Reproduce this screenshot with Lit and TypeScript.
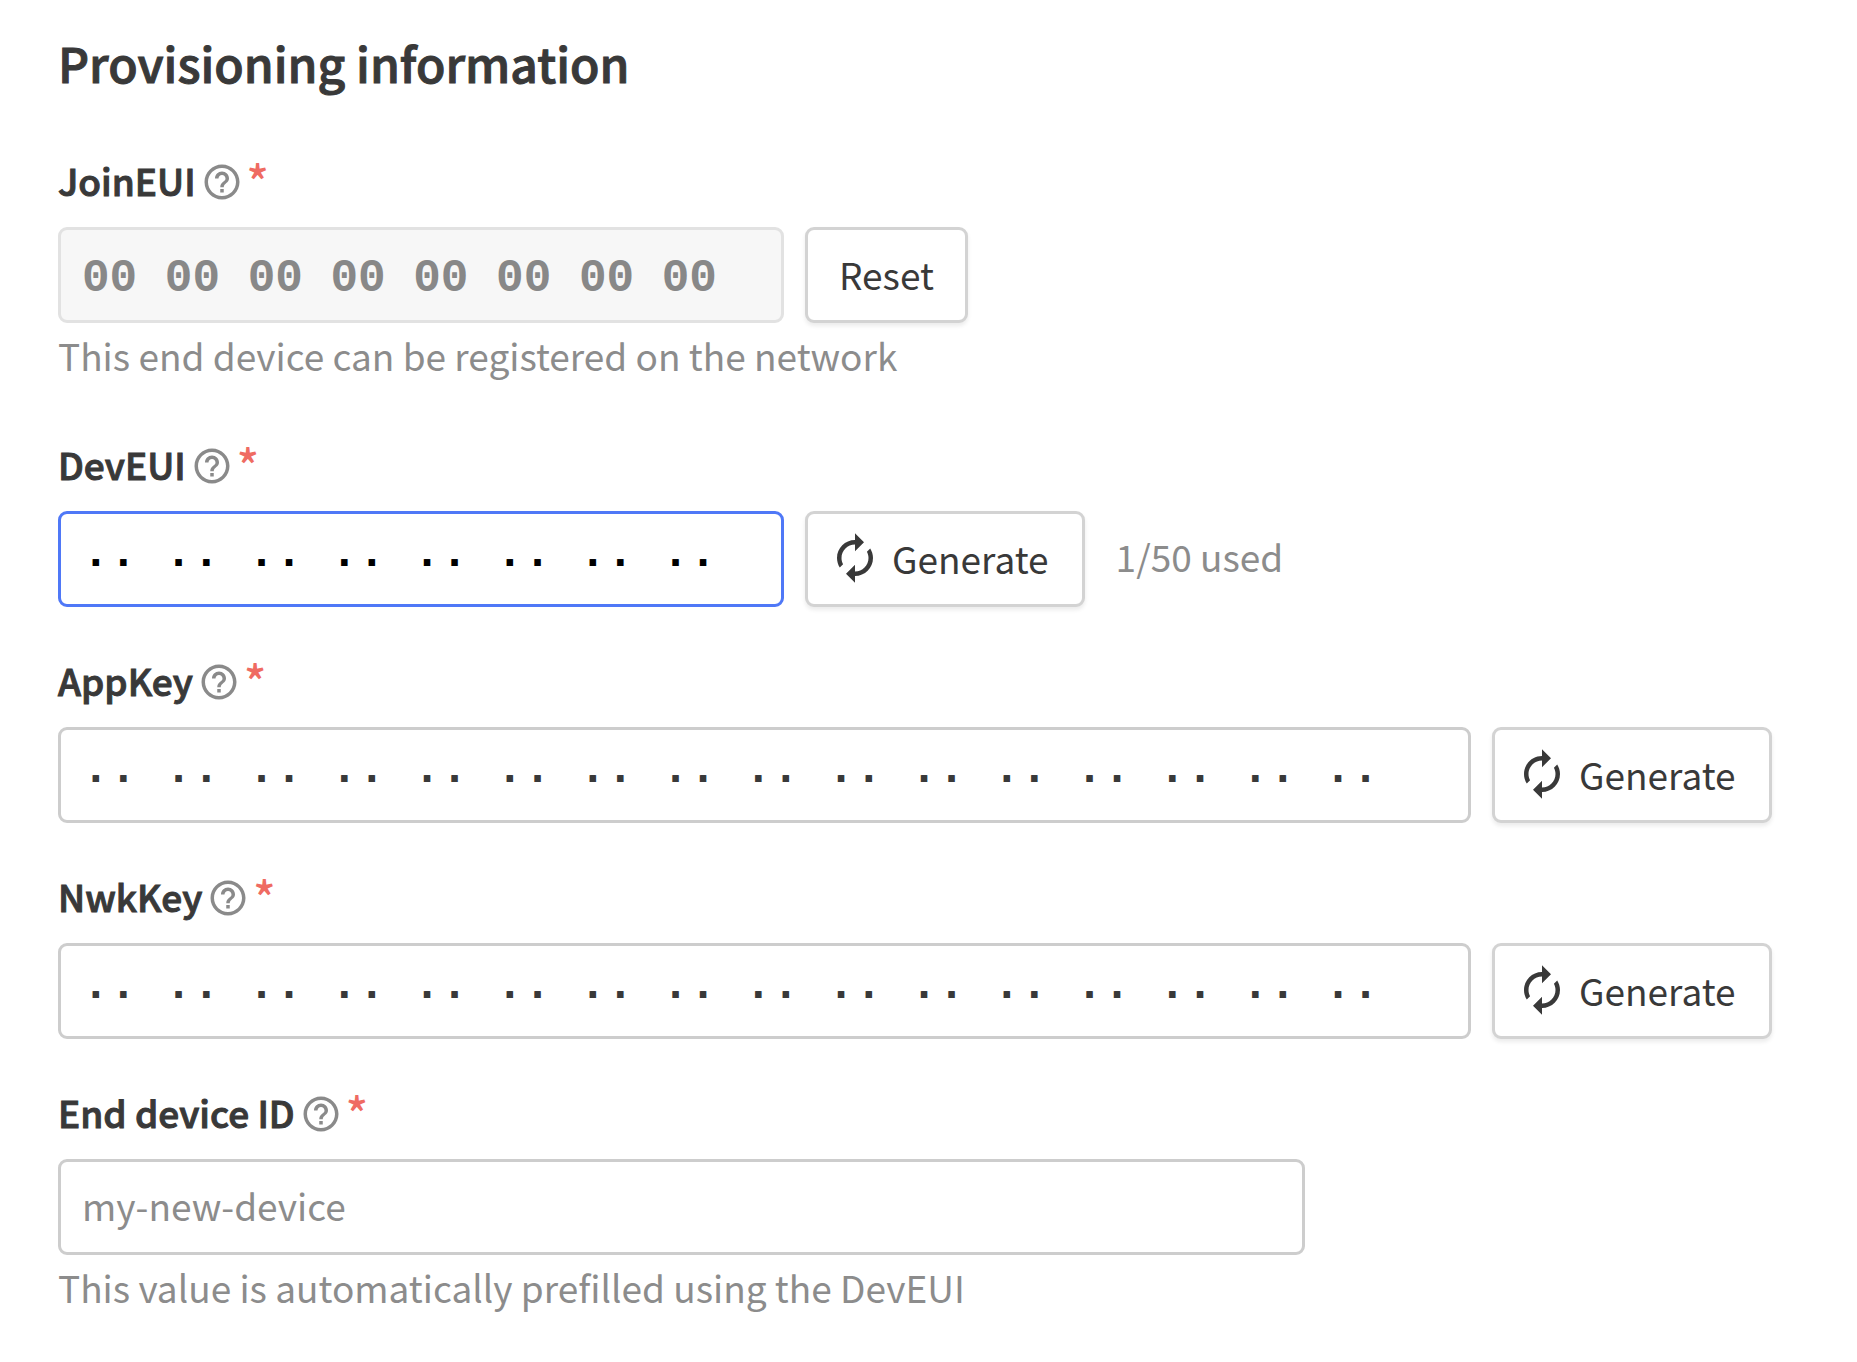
import { LitElement, html, css, svg, nothing } from "lit";
import { customElement, property } from "lit/decorators.js";
import { classMap } from "lit/directives/class-map.js";

const helpIcon = svg`<path d="M11 18h2v-2h-2v2zm1-16C6.48 2 2 6.48 2 12s4.48 10 10 10 10-4.48 10-10S17.52 2 12 2zm0 18c-4.41 0-8-3.59-8-8s3.59-8 8-8 8 3.59 8 8-3.59 8-8 8zm0-14c-2.21 0-4 1.79-4 4h2c0-1.1.9-2 2-2s2 .9 2 2c0 2-3 1.75-3 5h2c0-2.25 3-2.5 3-5 0-2.21-1.79-4-4-4z"/>`;
const renewIcon = svg`<path d="M12 6v3l4-4-4-4v3c-4.42 0-8 3.58-8 8 0 1.57.46 3.03 1.24 4.26L6.7 14.8c-.45-.83-.7-1.79-.7-2.8 0-3.31 2.69-6 6-6zm6.76 1.74L17.3 9.2c.44.84.7 1.79.7 2.8 0 3.31-2.69 6-6 6v-3l-4 4 4 4v-3c4.42 0 8-3.58 8-8 0-1.57-.46-3.03-1.24-4.26z"/>`;

interface Field {
  id: string;
  label: string;
  size: "short" | "medium" | "long";
  value?: string;
  placeholder?: string;
  bytes?: boolean;
  disabled?: boolean;
  active?: boolean;
  action?: "Reset" | "Generate";
  note?: string;
  hint?: string;
}

/** An empty masked value: two dots for each byte. */
const mask = (bytes: number) => Array(bytes).fill("··").join(" ");

const fields: Field[] = [
  {
    id: "join-eui",
    label: "JoinEUI",
    size: "short",
    value: Array(8).fill("00").join(" "),
    bytes: true,
    disabled: true,
    action: "Reset",
    hint: "This end device can be registered on the network",
  },
  {
    id: "dev-eui",
    label: "DevEUI",
    size: "short",
    value: mask(8),
    bytes: true,
    active: true,
    action: "Generate",
    note: "1/50 used",
  },
  { id: "app-key", label: "AppKey", size: "long", value: mask(16), bytes: true, action: "Generate" },
  { id: "nwk-key", label: "NwkKey", size: "long", value: mask(16), bytes: true, action: "Generate" },
  {
    id: "device-id",
    label: "End device ID",
    size: "medium",
    placeholder: "my-new-device",
    hint: "This value is automatically prefilled using the DevEUI",
  },
];

@customElement("form-field")
class FormField extends LitElement {
  @property({ attribute: false }) field!: Field;

  static styles = css`
    :host {
      display: block;
      font-size: 37px;
    }
    .head {
      display: flex;
      align-items: center;
      height: 54px;
      padding-bottom: 18px;
    }
    .label {
      padding-bottom: 5px;
      line-height: 56px;
      font-weight: 500;
      color: #393939;
      -webkit-text-stroke: 1px #393939;
    }
    .help {
      display: flex;
      margin: 0 4px 0 5px;
      padding: 0;
      border: 0;
      background: none;
      color: #8a8a8a;
    }
    .help svg {
      width: 42px;
      height: 42px;
      fill: currentColor;
    }
    .star {
      padding-bottom: 5px;
      font-size: 46px;
      line-height: 56px;
      font-weight: 500;
      color: #ef6b62;
    }
    .row {
      display: flex;
      align-items: center;
      gap: 21px;
    }
    .input {
      box-sizing: border-box;
      min-width: 0;
      height: 96px;
      margin: 0;
      padding: 0 21px 4px;
      border: 3px solid #cdcdcd;
      border-radius: 9px;
      outline: none;
      background: #fff;
      color: #393939;
      font-family: inherit;
      font-size: 37px;
    }
    .input::placeholder {
      color: #8c8c8c;
      opacity: 1;
    }
    .short {
      flex: 0 1 726px;
    }
    .medium {
      flex: 0 1 1247px;
    }
    .long {
      flex: 0 1 1413px;
    }
    .bytes {
      padding: 7px 21px 0;
      font-family: "Liberation Mono", monospace;
      font-size: 46px;
      font-weight: 700;
    }
    .input:disabled {
      border-color: #e2e2e2;
      background: #f7f7f7;
      color: #888;
    }
    .active {
      border-color: #4f78f7;
      color: #000;
    }
    .button {
      box-sizing: border-box;
      display: flex;
      flex: none;
      align-items: center;
      gap: 10px;
      height: 96px;
      margin: 0;
      padding: 0 31px 3px;
      border: 3px solid #d3d3d3;
      border-radius: 9px;
      background: #fff;
      box-shadow: 0 3px 4px rgba(0, 0, 0, 0.08);
      color: #393939;
      font-family: inherit;
      font-size: 37px;
    }
    .with-icon {
      padding: 0 33px 3px 20px;
    }
    .button svg {
      width: 54px;
      height: 54px;
      fill: currentColor;
    }
    .note {
      padding: 0 0 7px 10px;
      color: #8c8c8c;
    }
    .hint {
      margin: 0;
      padding-bottom: 4px;
      line-height: 64px;
      color: #8c8c8c;
    }
  `;

  render() {
    const f = this.field;
    const generate = f.action === "Generate";
    return html`
      <div class="head">
        <label class="label" for=${f.id}>${f.label}</label>
        <button class="help" type="button" aria-label="Help">
          <svg viewBox="0 0 24 24" aria-hidden="true">${helpIcon}</svg>
        </button>
        <span class="star" aria-hidden="true">*</span>
      </div>
      <div class="row">
        <input
          id=${f.id}
          type="text"
          class=${classMap({ input: true, [f.size]: true, bytes: !!f.bytes, active: !!f.active })}
          .value=${f.value ?? ""}
          placeholder=${f.placeholder ?? nothing}
          ?disabled=${!!f.disabled}
          required
        />
        ${f.action
          ? html`<button type="button" class=${classMap({ button: true, "with-icon": generate })}>
              ${generate ? html`<svg viewBox="0 0 24 24" aria-hidden="true">${renewIcon}</svg>` : nothing}
              <span>${f.action}</span>
            </button>`
          : nothing}
        ${f.note ? html`<span class="note">${f.note}</span>` : nothing}
      </div>
      ${f.hint ? html`<p class="hint">${f.hint}</p>` : nothing}
    `;
  }
}

@customElement("app-root")
class AppRoot extends LitElement {
  static styles = css`
    :host {
      display: block;
      background: #fff;
      font-family: "Noto Sans CJK SC", "Open Sans", sans-serif;
    }
    .form {
      padding: 26px 58px;
    }
    .title {
      margin: 0 0 57px;
      font-size: 48px;
      line-height: 72px;
      font-weight: 500;
      color: #393939;
      -webkit-text-stroke: 1px #393939;
    }
    .fields {
      display: flex;
      flex-direction: column;
      gap: 48px;
    }
  `;

  render() {
    return html`
      <form class="form">
        <h1 class="title">Provisioning information</h1>
        <div class="fields">
          ${fields.map((f) => html`<form-field .field=${f}></form-field>`)}
        </div>
      </form>
    `;
  }
}
